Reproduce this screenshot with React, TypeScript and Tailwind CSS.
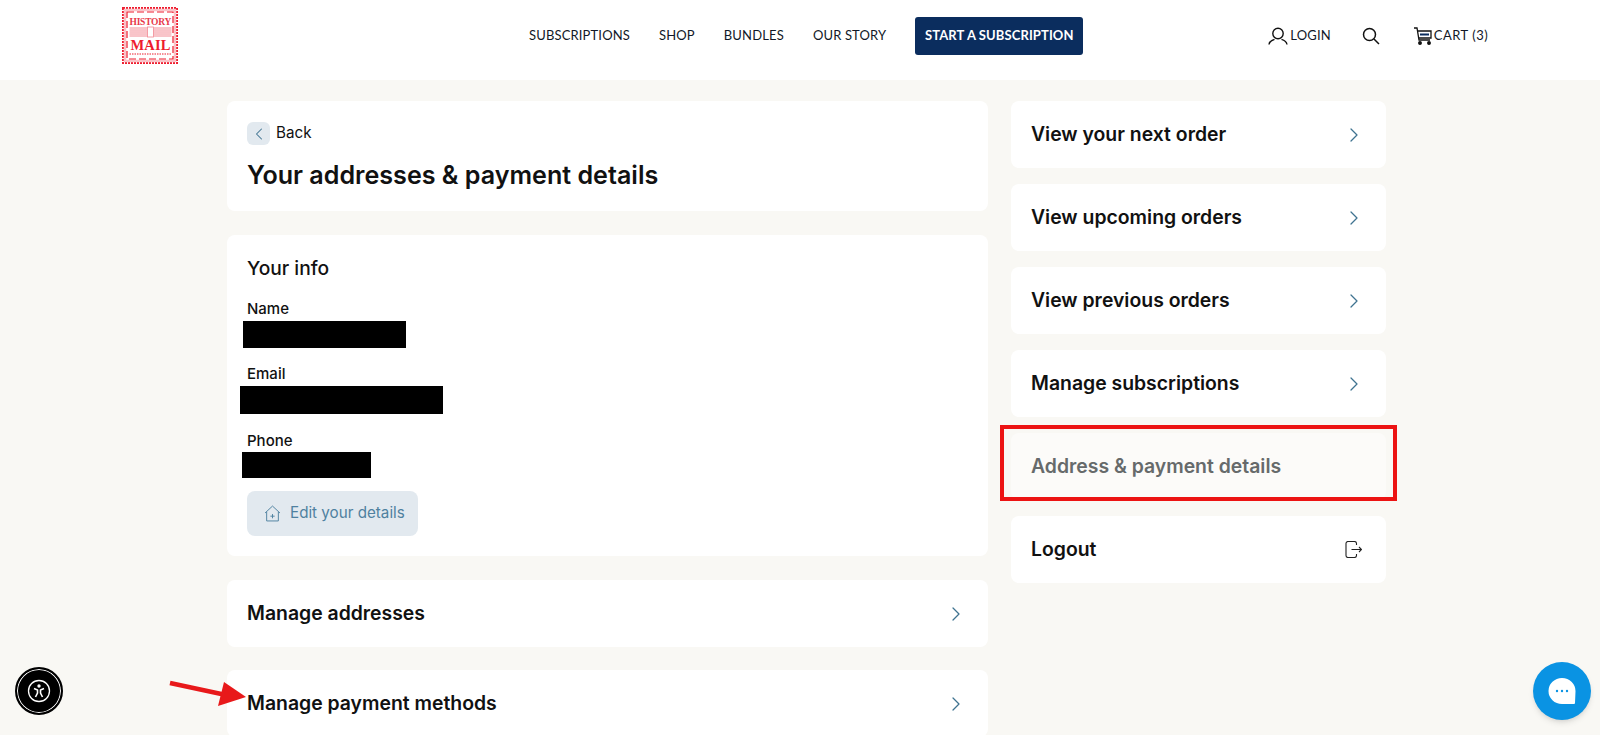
import { ChevronLeft, ChevronRight } from 'lucide-react';

const ACCOUNT_LINKS = ['View your next order', 'View upcoming orders', 'View previous orders', 'Manage subscriptions'];

function Logo() {
  return (
    <svg width="56" height="57" viewBox="0 0 56 57" className="mt-[7px] ml-[122px] shrink-0" aria-label="History by Mail">
      <rect x="1" y="1" width="54" height="55" fill="#fff" stroke="#ee1c2e" strokeWidth="2" strokeDasharray="2 1" />
      <rect x="3" y="3" width="50" height="51" fill="none" stroke="#f9c4c9" strokeWidth="2.5" />
      <rect x="5" y="5" width="46" height="47" fill="#fff" stroke="#ee1c2e" strokeWidth="1.2" strokeDasharray="7 3" />
      <text x="28.5" y="18" textAnchor="middle" fontFamily="Liberation Serif, serif" fontSize="9.5" fontWeight="700" fill="#e8394a" textLength="42">HISTORY</text>
      <path d="M7.5 21h42M7.5 23h42M7.5 25h42M7.5 27h42M7.5 29h42" stroke="#f28a94" strokeWidth="1" />
      <rect x="25.5" y="20" width="6" height="10" fill="#fff" stroke="#f28a94" strokeWidth="0.8" />
      <text x="28.5" y="43" textAnchor="middle" fontFamily="Liberation Serif, serif" fontSize="14.5" fontWeight="700" fill="#ee1c2e">MAIL</text>
      <path d="M7.5 47h42" stroke="#ee1c2e" strokeWidth="1" strokeDasharray="1.5 1" />
    </svg>
  );
}

function Header() {
  return (
    <header className="h-20 bg-white flex font-['Lato',sans-serif] text-[13px] text-[#111827] tracking-[0.15px]">
      <Logo />
      <nav className="flex items-center gap-[29px] ml-[351px] pb-[8px]">
        <a>SUBSCRIPTIONS</a>
        <a>SHOP</a>
        <a>BUNDLES</a>
        <a>OUR STORY</a>
        <a className="flex items-center justify-center w-[168px] h-[38px] rounded-[3px] bg-[#0b2d5e] text-white font-bold tracking-[0.1px]">START A SUBSCRIPTION</a>
      </nav>
      <div className="flex items-center ml-[185px] pb-[8px]">
        <svg width="20" height="18" viewBox="0 0 20 18" fill="none" stroke="#111" strokeWidth="1.4">
          <circle cx="10" cy="6.5" r="5.2" />
          <path d="M1 17.5c.5-3 3-4.5 5.5-5.2M19 17.5c-.5-3-3-4.5-5.5-5.2" />
        </svg>
        <span className="ml-[2px]">LOGIN</span>
        <svg width="18" height="18" viewBox="0 0 18 18" fill="none" stroke="#111" strokeWidth="1.5" className="ml-[31px]">
          <circle cx="7.5" cy="7.5" r="6" />
          <path d="M12 12l5 5" />
        </svg>
        <svg width="19" height="18" viewBox="0 0 19 18" fill="none" stroke="#111" strokeWidth="1.3" className="ml-[33px]">
          <path d="M1 1h3l2 12h11" />
          <path d="M4.5 4h13.5v7H6" />
          <rect x="7" y="6.5" width="9" height="2" fill="#0b2d5e" stroke="none" />
          <circle cx="7" cy="16" r="1.3" fill="#111" />
          <circle cx="16" cy="16" r="1.3" fill="#111" />
        </svg>
        <span className="ml-[2px] tracking-[0.5px]">CART (3)</span>
      </div>
    </header>
  );
}

function RowCard({ label }: { label: string }) {
  return (
    <a className="h-[67px] bg-white rounded-lg flex items-center justify-between pl-5 pr-[20px] text-[19.4px] font-semibold text-[#111]">
      {label}
      <ChevronRight className="w-[24px] h-[24px] text-[#3f7390]" strokeWidth={1.25} aria-hidden="true" />
    </a>
  );
}

export default function App() {
  return (
    <div className="relative h-[735px] overflow-hidden bg-[#f9f8f4] font-['Inter',sans-serif]">
      <Header />

      <main className="flex gap-[23px] pl-[227px] pt-[21px]">
        <div className="w-[761px] flex flex-col">
          <section className="h-[110px] bg-white rounded-lg px-5 pt-[21px]">
            <a className="flex items-center gap-[6px] text-[15.2px] text-[#111]">
              <span className="w-[23px] h-[23px] rounded-md bg-[#e2e9ef] flex items-center justify-center">
                <ChevronLeft className="w-[20px] h-[20px] text-[#3f7390]" strokeWidth={1.25} aria-hidden="true" />
              </span>
              Back
            </a>
            <h1 className="mt-[14px] text-[25.1px] leading-[32px] font-semibold text-[#111]">Your addresses &amp; payment details</h1>
          </section>

          <section className="mt-6 h-[321px] bg-white rounded-lg px-5 pt-[21px]">
            <h2 className="text-[19.2px] leading-[24px] font-medium text-[#111]">Your info</h2>
            <div className="mt-[20px] mb-[3px] text-[15px] leading-[18px] font-medium text-[#111]">Name</div>
            <div className="bg-black w-[163px] h-[27px] -ml-[4px]" />
            <div className="mt-[17px] mb-[3px] text-[15px] leading-[18px] font-medium text-[#111]">Email</div>
            <div className="bg-black w-[203px] h-[28px] -ml-[7px]" />
            <div className="mt-[18px] mb-[2px] text-[15px] leading-[18px] font-medium text-[#111]">Phone</div>
            <div className="bg-black w-[129px] h-[26px] -ml-[5px]" />
            <a className="mt-[13px] w-[171px] h-[45px] rounded-lg bg-[#e2e9ef] flex items-center pl-[17px] gap-[9px] text-[15.2px] text-[#4f81a0]">
              <svg width="17" height="17" viewBox="0 0 16 16" fill="none" stroke="#4f81a0" strokeWidth="0.9">
                <path d="M1 7.5L8 1l7 6.5M2.5 6.5V15h11V6.5M8 8.5v4M6 10.5h4" />
              </svg>
              Edit your details
            </a>
          </section>

          <div className="mt-6 flex flex-col gap-[23px]">
            <RowCard label="Manage addresses" />
            <RowCard label="Manage payment methods" />
          </div>
        </div>

        <aside className="w-[375px] flex flex-col gap-4">
          {ACCOUNT_LINKS.map((link) => (
            <RowCard key={link} label={link} />
          ))}
          <a className="h-[67px] bg-[#fcfbf9] rounded-lg flex items-center pl-5 text-[19.4px] font-semibold text-[#666a6b]">Address &amp; payment details</a>
          <a className="h-[67px] bg-white rounded-lg flex items-center justify-between pl-5 pr-[24px] text-[19.4px] font-semibold text-[#111]">
            Logout
            <svg width="17" height="17" viewBox="0 0 17 17" fill="none" stroke="#222" strokeWidth="1.1" aria-hidden="true">
              <path d="M11.5 4V2.5a2 2 0 0 0-2-2H3a2 2 0 0 0-2 2v12a2 2 0 0 0 2 2h6.5a2 2 0 0 0 2-2V13" />
              <path d="M6.5 8.5h10M14 6l2.5 2.5L14 11" />
            </svg>
          </a>
        </aside>
      </main>

      {/* annotations drawn over the page */}
      <div className="absolute left-[1000px] top-[425px] w-[397px] h-[76px] border-[4px] border-[#ec1313]" />
      <svg width="80" height="30" viewBox="0 0 80 30" className="absolute left-[168px] top-[680px]" aria-hidden="true">
        <path d="M2 3L58 15" stroke="#e8191a" strokeWidth="4.5" />
        <polygon points="78,17 56,2 50,26" fill="#e8191a" />
      </svg>

      <div className="absolute left-[15px] top-[667px] w-12 h-12 rounded-full bg-black border-2 border-black flex items-center justify-center shadow-[inset_0_0_0_1px_#fff]">
        <svg width="24" height="24" viewBox="0 0 24 24" fill="none" stroke="#fff" aria-label="Accessibility">
          <circle cx="12" cy="12" r="10.5" strokeWidth="1.3" />
          <circle cx="12" cy="7" r="1.7" fill="#fff" stroke="none" />
          <path d="M7 9.5l3.5 1.5v3L8.5 18M17 9.5L13.5 11v3l2 4" strokeWidth="1.6" />
        </svg>
      </div>

      <div className="absolute left-[1533px] top-[662px] w-[58px] h-[58px] rounded-full bg-[#0a93e3] shadow-md flex items-center justify-center">
        <svg width="28" height="26" viewBox="0 0 28 26" aria-label="Chat">
          <path d="M14 0a13.5 13 0 1 0 0 26h12a1 1 0 0 0 1-1l.5-11.5A13.5 13 0 0 0 14 0z" fill="#fff" />
          <circle cx="9" cy="13" r="1.2" fill="#0a93e3" />
          <circle cx="14" cy="13" r="1.2" fill="#0a93e3" />
          <circle cx="19" cy="13" r="1.2" fill="#0a93e3" />
        </svg>
      </div>
    </div>
  );
}
